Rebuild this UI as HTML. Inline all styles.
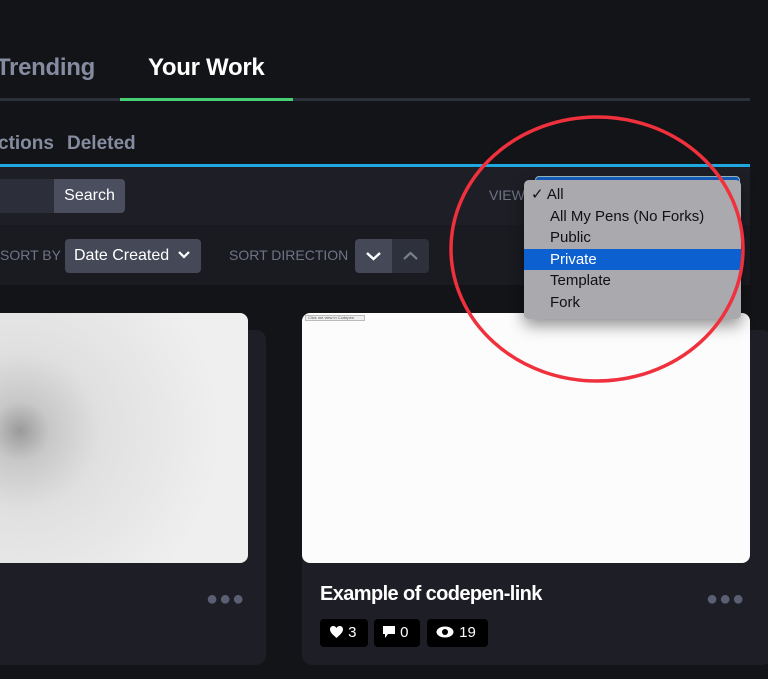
<!DOCTYPE html>
<html><head><style>
*{margin:0;padding:0;box-sizing:border-box}
body{width:768px;height:679px;background:#131417;font-family:"Liberation Sans",sans-serif;position:relative;overflow:hidden;color:#fff}
.a{position:absolute}
</style></head><body>
<div class="a" style="left:-4px;top:54px;font-size:24px;font-weight:bold;color:#868ca0;letter-spacing:-0.3px">Trending</div>
<div class="a" style="left:148px;top:54px;font-size:24px;font-weight:bold;color:#fff;letter-spacing:-0.3px">Your Work</div>
<div class="a" style="left:0;top:98px;width:750px;height:3px;background:#2c303a"></div>
<div class="a" style="left:120px;top:98px;width:173px;height:3px;background:#47cf73"></div>
<div class="a" style="left:-2px;top:133px;font-size:19px;font-weight:bold;color:#868ca0">ctions</div>
<div class="a" style="left:67px;top:133px;font-size:19px;font-weight:bold;color:#868ca0">Deleted</div>
<div class="a" style="left:0;top:164px;width:750px;height:3px;background:#1fa8e0"></div>
<div class="a" style="left:0;top:167px;width:750px;height:58px;background:#1e1f26"></div>
<div class="a" style="left:0;top:225px;width:750px;height:60px;background:#1a1b21"></div>
<div class="a" style="left:0;top:179px;width:54px;height:34px;background:#2c2f3a"></div>
<div class="a" style="left:54px;top:179px;width:71px;height:34px;background:#4a4e5e;border-radius:0 4px 4px 0;font-size:16px;line-height:34px;text-align:center">Search</div>
<div class="a" style="left:489px;top:187px;font-size:14px;color:#6f7385">VIEW</div>
<div class="a" style="left:535px;top:176px;width:205px;height:8px;background:#1660c8;border-radius:4px 4px 0 0;border:1px solid #9bb"></div>
<div class="a" style="left:0;top:247px;font-size:14px;color:#6f7385">SORT BY</div>
<div class="a" style="left:65px;top:239px;width:136px;height:34px;background:#444857;border-radius:4px;font-size:16px;line-height:34px;padding-left:9px">Date Created <svg width="14" height="10" viewBox="0 0 14 10" style="margin-left:3px"><path d="M2 2l5 5 5-5" stroke="#fff" stroke-width="2.2" fill="none"/></svg></div>
<div class="a" style="left:229px;top:247px;font-size:14px;color:#6f7385">SORT DIRECTION</div>
<div class="a" style="left:355px;top:239px;width:37px;height:34px;background:#444857;border-radius:4px 0 0 4px"><svg width="37" height="34"><path d="M12 14l6.5 6 6.5-6" stroke="#fff" stroke-width="2.4" fill="none"/></svg></div>
<div class="a" style="left:392px;top:239px;width:37px;height:34px;background:#2e313c;border-radius:0 4px 4px 0"><svg width="37" height="34"><path d="M12 20l6.5-6 6.5 6" stroke="#7b8090" stroke-width="2.2" fill="none"/></svg></div>

<div class="a" style="left:0;top:330px;width:266px;height:335px;background:#1e1f26;border-radius:0 10px 10px 0"></div>
<div class="a" style="left:0;top:313px;width:248px;height:250px;border-radius:0 8px 8px 0;background:radial-gradient(circle at 20px 118px,#9a9a9a 0,#c8c8c8 30px,#e0e0e0 80px,#efefef 200px)"></div>
<div class="a" style="left:206px;top:588px;font-size:20px;color:#5a5f73;letter-spacing:1px">●●●</div>

<div class="a" style="left:302px;top:330px;width:470px;height:335px;background:#1e1f26;border-radius:10px"></div>
<div class="a" style="left:302px;top:313px;width:448px;height:250px;background:#fcfcfc;border-radius:8px"></div>
<div class="a" style="left:305px;top:315px;width:60px;height:6px;border:1px solid #bbb;background:#eee;font-size:4px;color:#555;line-height:4px;padding-left:2px">Click me view in Codepen</div>
<div class="a" style="left:320px;top:583px;font-size:20px;font-weight:bold;letter-spacing:-0.6px">Example of codepen-link</div>
<div class="a" style="left:706px;top:588px;font-size:20px;color:#5a5f73;letter-spacing:1px">●●●</div>
<div class="a" style="left:320px;top:619px;width:48px;height:28px;background:#000;border-radius:4px;font-size:15px;line-height:28px;padding-left:9px"><svg width="15" height="14" viewBox="0 0 15 14" style="vertical-align:-2px"><path d="M7.5 13C3 9 1 7 1 4.2 1 2.3 2.5 1 4.2 1c1.4 0 2.5.8 3.3 2C8.3 1.8 9.4 1 10.8 1 12.5 1 14 2.3 14 4.2 14 7 12 9 7.5 13z" fill="#fff"/></svg> 3</div>
<div class="a" style="left:374px;top:619px;width:46px;height:28px;background:#000;border-radius:4px;font-size:15px;line-height:28px;padding-left:8px"><svg width="14" height="14" viewBox="0 0 14 14" style="vertical-align:-2px"><path d="M1 1h12v8H6l-3 4V9H1z" fill="#fff"/></svg> 0</div>
<div class="a" style="left:427px;top:619px;width:61px;height:28px;background:#000;border-radius:4px;font-size:15px;line-height:28px;padding-left:8px"><svg width="20" height="14" viewBox="0 0 20 14" style="vertical-align:-2px"><ellipse cx="10" cy="7" rx="8.5" ry="5.5" fill="#fff"/><circle cx="10" cy="7" r="3" fill="#000"/></svg> 19</div>

<div class="a" style="left:524px;top:180px;width:217px;height:139px;background:#a9a9ae;border-radius:5px;box-shadow:0 6px 16px rgba(0,0,0,.45);font-size:15px;color:#111">
<div style="height:21.5px;line-height:21.5px;padding-left:7px;margin-top:4px">✓ All</div>
<div style="height:21.5px;line-height:21.5px;padding-left:26px">All My Pens (No Forks)</div>
<div style="height:21.5px;line-height:21.5px;padding-left:26px">Public</div>
<div style="height:21.5px;line-height:21.5px;padding-left:26px;background:#0d60d0;color:#fff">Private</div>
<div style="height:21.5px;line-height:21.5px;padding-left:26px">Template</div>
<div style="height:21.5px;line-height:21.5px;padding-left:26px">Fork</div>
</div>
<svg class="a" style="left:0;top:0" width="768" height="679"><ellipse cx="597" cy="249" rx="146" ry="132" fill="none" stroke="#f0303c" stroke-width="3.5"/></svg>
</body></html>
